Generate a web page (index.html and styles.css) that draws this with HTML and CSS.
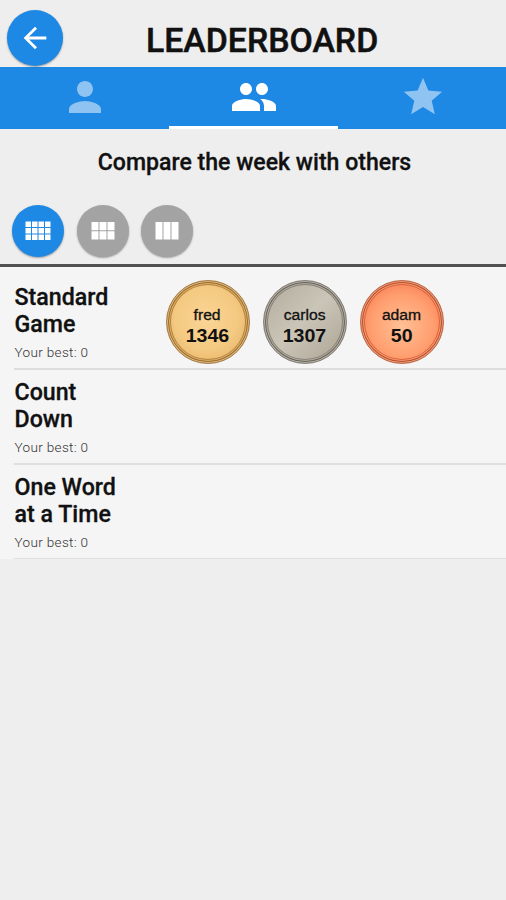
FILE: index.html
```html
<!DOCTYPE html>
<html lang="en">
<head>
<meta charset="utf-8">
<title>Leaderboard</title>
<link rel="stylesheet" href="styles.css">
</head>
<body>
<header class="header">
  <button class="round back" aria-label="Back">
    <svg width="34" height="34" viewBox="0 0 24 24"><path d="M20 11H7.83l5.59-5.59L12 4l-8 8 8 8 1.41-1.41L7.83 13H20v-2z"/></svg>
  </button>
  <h1 class="title">LEADERBOARD</h1>
</header>
<nav class="tabs">
  <a class="tab"><svg width="48" height="48" viewBox="0 0 24 24"><path d="M12 12c2.21 0 4-1.79 4-4s-1.79-4-4-4-4 1.79-4 4 1.79 4 4 4zm0 2c-2.67 0-8 1.34-8 4v2h16v-2c0-2.66-5.33-4-8-4z"/></svg></a>
  <a class="tab active"><svg width="48" height="48" viewBox="0 0 24 24"><path d="M16 11c1.66 0 2.99-1.34 2.99-3S17.66 5 16 5s-3 1.34-3 3 1.34 3 3 3zm-8 0c1.66 0 2.99-1.34 2.99-3S9.66 5 8 5 5 6.34 5 8s1.34 3 3 3zm0 2c-2.33 0-7 1.17-7 3.5V19h14v-2.5C15 14.170 10.330 13 8 13zm8 0c-.29 0-.62.02-.97.05 1.160.84 1.970 1.970 1.970 3.450V19h6v-2.500c0-2.330-4.670-3.500-7-3.500z"/></svg></a>
  <a class="tab star"><svg width="46" height="46" viewBox="0 0 24 24"><path d="M12 17.27L18.18 21l-1.64-7.03L22 9.24l-7.19-.61L12 2 9.19 8.63 2 9.24l5.46 4.730L5.820 21z"/></svg></a>
</nav>
<section class="controls">
  <h2 class="subtitle">Compare the week with others</h2>
  <div class="filters">
    <button class="round filter selected" aria-label="Four by three">
      <svg width="26" height="20" viewBox="0 0 26 20"><path d="M.5.500h5.500v5.500H.5zM7 .5h5.500V6H7zM13.500.5H19V6h-5.500zM20 .5h5.500V6H20zM.5 7H6v5.500H.5zM7 7h5.500v5.500H7zM13.500 7H19v5.500h-5.500zM20 7h5.500v5.500H20zM.5 13.500H6V19H.5zM7 13.500h5.500V19H7zM13.500 13.500H19V19h-5.500zM20 13.500h5.500V19H20z"/></svg>
    </button>
    <button class="round filter" aria-label="Three by two">
      <svg width="24" height="18" viewBox="0 0 24 18"><path d="M.5 0h7v8.300h-7zM8.500 0h7v8.300h-7zM16.500 0h7v8.300h-7zM.5 9.300h7v8.300h-7zM8.500 9.300h7v8.300h-7zM16.500 9.300h7v8.300h-7z"/></svg>
    </button>
    <button class="round filter" aria-label="Three columns">
      <svg width="24" height="18" viewBox="0 0 24 18"><path d="M.5 0h7v17.600h-7zM8.500 0h7v17.600h-7zM16.500 0h7v17.600h-7z"/></svg>
    </button>
  </div>
</section>
<main class="list">
  <article class="row">
    <div class="game">
      <h3 class="name">Standard<br>Game</h3>
      <p class="best">Your best: 0</p>
    </div>
    <div class="medals">
      <div class="medal gold"><span class="player">fred</span><span class="score">1346</span></div>
      <div class="medal silver"><span class="player">carlos</span><span class="score">1307</span></div>
      <div class="medal bronze"><span class="player">adam</span><span class="score">50</span></div>
    </div>
  </article>
  <article class="row">
    <div class="game">
      <h3 class="name">Count<br>Down</h3>
      <p class="best">Your best: 0</p>
    </div>
  </article>
  <article class="row">
    <div class="game">
      <h3 class="name">One Word<br>at a Time</h3>
      <p class="best">Your best: 0</p>
    </div>
  </article>
</main>
</body>
</html>
```
FILE: styles.css
```css
* { box-sizing: border-box; margin: 0; padding: 0; }

body {
  min-height: 900px;
  background: #eee;
  color: #111;
  font-family: Roboto, "Liberation Sans", sans-serif;
  overflow: hidden;
}

svg { display: block; fill: #fff; }

.header {
  display: grid;
  grid-template-columns: 56px 1fr;
  height: 67px;
  padding: 10px 0 0 7px;
}

.round {
  display: flex;
  align-items: center;
  justify-content: center;
  border: 0;
  border-radius: 50%;
  background: #1e88e5;
  box-shadow: 0 1px 2px rgba(0, 0, 0, .35);
}

.back { width: 56px; height: 56px; }

.title {
  padding: 11px 0 0 83px;
  font-size: 33.8px;
  font-weight: 500;
  line-height: 40px;
  white-space: nowrap;
  -webkit-text-stroke: .5px #111;
}

.tabs {
  display: grid;
  grid-template-columns: 169px 169px 168px;
  height: 62px;
  background: #1e88e5;
}

.tab {
  display: flex;
  justify-content: center;
  padding-top: 6px;
  border-bottom: 3px solid transparent;
}

.tab svg { opacity: .5; }
.tab.star { padding: 7px 0 0 1px; }
.tab.active { border-bottom-color: #fff; }
.tab.active svg { opacity: 1; }

.controls {
  height: 138px;
  padding-top: 20px;
  border-bottom: 3px solid #505050;
}

.subtitle {
  padding-left: 3px;
  font-size: 23.1px;
  font-weight: 500;
  line-height: 28px;
  text-align: center;
  white-space: nowrap;
  -webkit-text-stroke: .3px #111;
}

.filters {
  display: flex;
  gap: 12px;
  padding: 28.400px 0 0 12px;
}

.filter { width: 52px; height: 52px; background: #a3a3a3; }
.filter.selected { margin-right: 1px; background: #1e88e5; }

.list { background: #f5f5f5; }

.row {
  display: grid;
  grid-template-columns: 151px 1fr;
  height: 95px;
  margin-left: 14px;
  border-bottom: 2px solid #dedede;
}

.row:first-child { height: 103px; padding-top: 8px; }
.row:last-child { height: 94px; border-bottom-width: 1px; }

.game { padding-top: 9px; }

.name {
  padding-left: .5px;
  font-size: 23.200px;
  font-weight: 500;
  line-height: 27px;
  -webkit-text-stroke: .3px #111;
}

.best {
  padding-left: .5px;
  margin-top: 6px;
  color: #333;
  font-size: 13.500px;
  font-weight: 300;
  line-height: 16px;
  letter-spacing: .35px;
}

.medals { display: flex; gap: 13px; padding: 5px 0 0 .5px; }

.medal {
  display: flex;
  flex-direction: column;
  align-items: center;
  width: 84px;
  height: 84px;
  padding: 24px 0 0 0;
  border: 1px solid;
  border-radius: 50%;
  font-family: "Liberation Sans", Arial, sans-serif;
}

.player {
  font-size: 14px;
  line-height: 21px;
  transform: scaleX(1.12);
  -webkit-text-stroke: .3px #111;
}

.score {
  font-size: 17.500px;
  font-weight: 700;
  line-height: 20px;
  transform: scaleX(1.12);
}

.gold {
  border-color: #a57d48;
  background: radial-gradient(circle at 48% 46%, #fbd596, #f4c981 50%, #dba95c);
  box-shadow: inset 0 0 0 1px #e0bd83, inset 0 0 0 2px #9a6a2d, inset 0 0 0 3px #dcae66, inset 0 0 0 4px #b5823f;
}

.silver {
  border-color: #85817a;
  background: linear-gradient(135deg, #b0aa9d, #cbc5b8 48%, #aaa393);
  box-shadow: inset 0 0 0 1px #bbb5a9, inset 0 0 0 2px #66625a, inset 0 0 0 3px #b0aa9e, inset 0 0 0 4px #878177;
}

.bronze {
  border-color: #bd694a;
  background: radial-gradient(circle at 50% 55%, #ffc095, #ff9f70 50%, #f4673f);
  box-shadow: inset 0 0 0 1px #efa17d, inset 0 0 0 2px #b64b2b, inset 0 0 0 3px #f39b72, inset 0 0 0 4px #dc6038;
}
```
